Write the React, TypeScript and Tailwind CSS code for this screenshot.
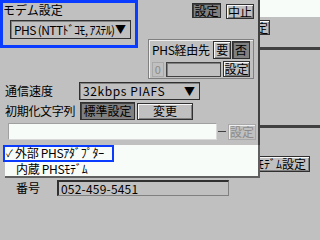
import React from "react";

const font = "font-['Noto_Sans_CJK_JP','Noto_Sans_CJK_SC',sans-serif]";

function Btn(props: { label: string; pressed?: boolean; disabled?: boolean; className?: string }) {
  const { label, pressed, disabled, className } = props;
  return (
    <div
      className={
        "flex items-center justify-center text-[12px] leading-none border " +
        (pressed
          ? "bg-[#808080] border-[#303030] text-black shadow-[inset_1px_1px_0_#404040]"
          : disabled
          ? "bg-[#c0c0c0] border-[#a8a8a8] text-[#8c8c8c] shadow-[inset_1px_1px_0_#f0f0f0]"
          : "bg-[#c0c0c0] border-[#303030] text-black shadow-[inset_1px_1px_0_#f8f8f8,inset_-1px_-1px_0_#808080]") +
        " " +
        (className ?? "")
      }
    >
      {label}
    </div>
  );
}

function Select(props: { label: string; className?: string; textClass?: string }) {
  return (
    <div
      className={
        "flex items-center justify-between border border-[#303030] bg-[#c0c0c0] shadow-[inset_1px_1px_0_#808080] pl-[3px] pr-1 text-[12px] leading-none " +
        (props.className ?? "")
      }
    >
      <span className={"whitespace-nowrap " + (props.textClass ?? "")}>{props.label}</span>
      <span className="text-[11px]">▼</span>
    </div>
  );
}

function BackWindow() {
  return (
    <div className="absolute inset-0 flex flex-col">
      <div className="h-[17px] bg-[#f8fcf8]" />
      <div className="flex mt-[3px] ml-[242px]">
        <Btn label="設定" className="w-[28px] h-[15px] justify-end pr-[1px]" />
      </div>
      <div className="h-[3px] bg-[#404040] mt-[12px]" />
      <div className="h-[3px] bg-[#404040] mt-[75px]" />
      <div className="flex mt-[28px] ml-[230px]">
        <Btn label="ﾓﾃﾞﾑ設定" className="w-[80px] h-[16px] justify-end pr-[3px]" />
      </div>
      <div className="flex items-center mt-[7px]">
        <span className="ml-[16px] w-[41px] text-[12px]">番号</span>
        <div className="w-[172px] h-[16px] border-t-2 border-l-2 border-[#303030] border-r border-b border-r-[#808080] border-b-[#808080] text-[12px] leading-none flex items-center pl-[2px] tracking-[0.2px]">
          052-459-5451
        </div>
      </div>
    </div>
  );
}

function Dialog() {
  return (
    <div className="absolute left-0 top-0 w-[260px] h-[150px] bg-[#c0c0c0] border-r-2 border-[#404040] flex flex-col">
      <div className="flex h-[80px]">
        <div className="w-[138px] h-[48px] border-[3px] border-[#0a3cff] flex flex-col">
          <span className="text-[12px] leading-none mt-[1px]">モデム設定</span>
          <Select label="PHS (NTTﾄﾞｺﾓ, ｱｽﾃﾙ)" textClass="tracking-[-0.6px]" className="ml-[7px] mt-[4px] w-[121px] h-[19px]" />
        </div>
        <div className="ml-[10px] w-[108px] flex flex-col">
          <div className="flex justify-end gap-[5px] mt-[3px] pr-[2px]">
            <Btn label="設定" pressed className="w-[29px] h-[15px]" />
            <Btn label="中止" className="w-[28px] h-[15px] mt-[1px]" />
          </div>
          <div className="mt-[20px] w-[106px] h-[40px] border border-[#808080] shadow-[inset_1px_1px_0_#f0f0f0] flex flex-col px-[3px]">
            <div className="flex items-center mt-[1px]">
              <span className="text-[12px] leading-none w-[62px] tracking-[-0.3px]">PHS経由先</span>
              <Btn label="要" className="w-[18px] h-[18px]" />
              <Btn label="否" pressed className="w-[18px] h-[18px] ml-[1px]" />
            </div>
            <div className="flex items-center mt-[2px]">
              <div className="w-[12px] h-[15px] border border-[#a8a8a8] text-[11px] text-[#8c8c8c] leading-none flex items-center justify-center">0</div>
              <div className="ml-[2px] w-[57px] h-[15px] border border-[#404040] shadow-[inset_1px_1px_0_#808080]" />
              <Btn label="設定" className="ml-[2px] w-[28px] h-[16px]" />
            </div>
          </div>
        </div>
      </div>
      <div className="flex items-center mt-[2px]">
        <span className="ml-[5px] w-[74px] text-[12px] leading-none">通信速度</span>
        <Select label="32kbps PIAFS" textClass="tracking-[0.6px]" className="w-[121px] h-[18px]" />
      </div>
      <div className="flex items-center mt-[2px]">
        <span className="ml-[5px] w-[75px] text-[12px] leading-none tracking-[-0.3px]">初期化文字列</span>
        <Btn label="標準設定" pressed className="w-[55px] h-[18px]" />
        <Btn label="変更" className="ml-[2px] w-[56px] h-[17px]" />
      </div>
      <div className="flex items-center mt-[3px]">
        <div className="ml-[8px] w-[209px] h-[17px] bg-[#f8fcf8] border border-[#d8d8d8] border-t-[#a0a0a0] border-l-[#a0a0a0]" />
        <div className="ml-[1px] w-[8px] h-[1px] bg-[#404040]" />
        <Btn label="設定" disabled className="ml-[2px] w-[28px] h-[16px]" />
      </div>
    </div>
  );
}

function DropList() {
  return (
    <div className="absolute left-[5px] top-[145px] w-[255px] h-[33px] bg-[#f8fcf8] border-r-2 border-b-2 border-[#606060] flex flex-col">
      <div className="-ml-[2px] w-[111px] h-[17px] border-2 border-[#0a3cff] flex items-center text-[12px] leading-none">
        <span className="w-[9px] text-[10px] ml-[1px]">✓</span>
        <span className="tracking-[-0.3px]">外部 PHSｱﾀﾞﾌﾟﾀｰ</span>
      </div>
      <div className="h-[15px] flex items-center text-[12px] leading-none pl-[11px] tracking-[-0.3px]">
        内蔵 PHSﾓﾃﾞﾑ
      </div>
    </div>
  );
}

export default function App() {
  return (
    <div className={"relative w-[320px] h-[240px] overflow-hidden bg-[#c0c0c0] text-black " + font}>
      <BackWindow />
      <Dialog />
      <DropList />
    </div>
  );
}
